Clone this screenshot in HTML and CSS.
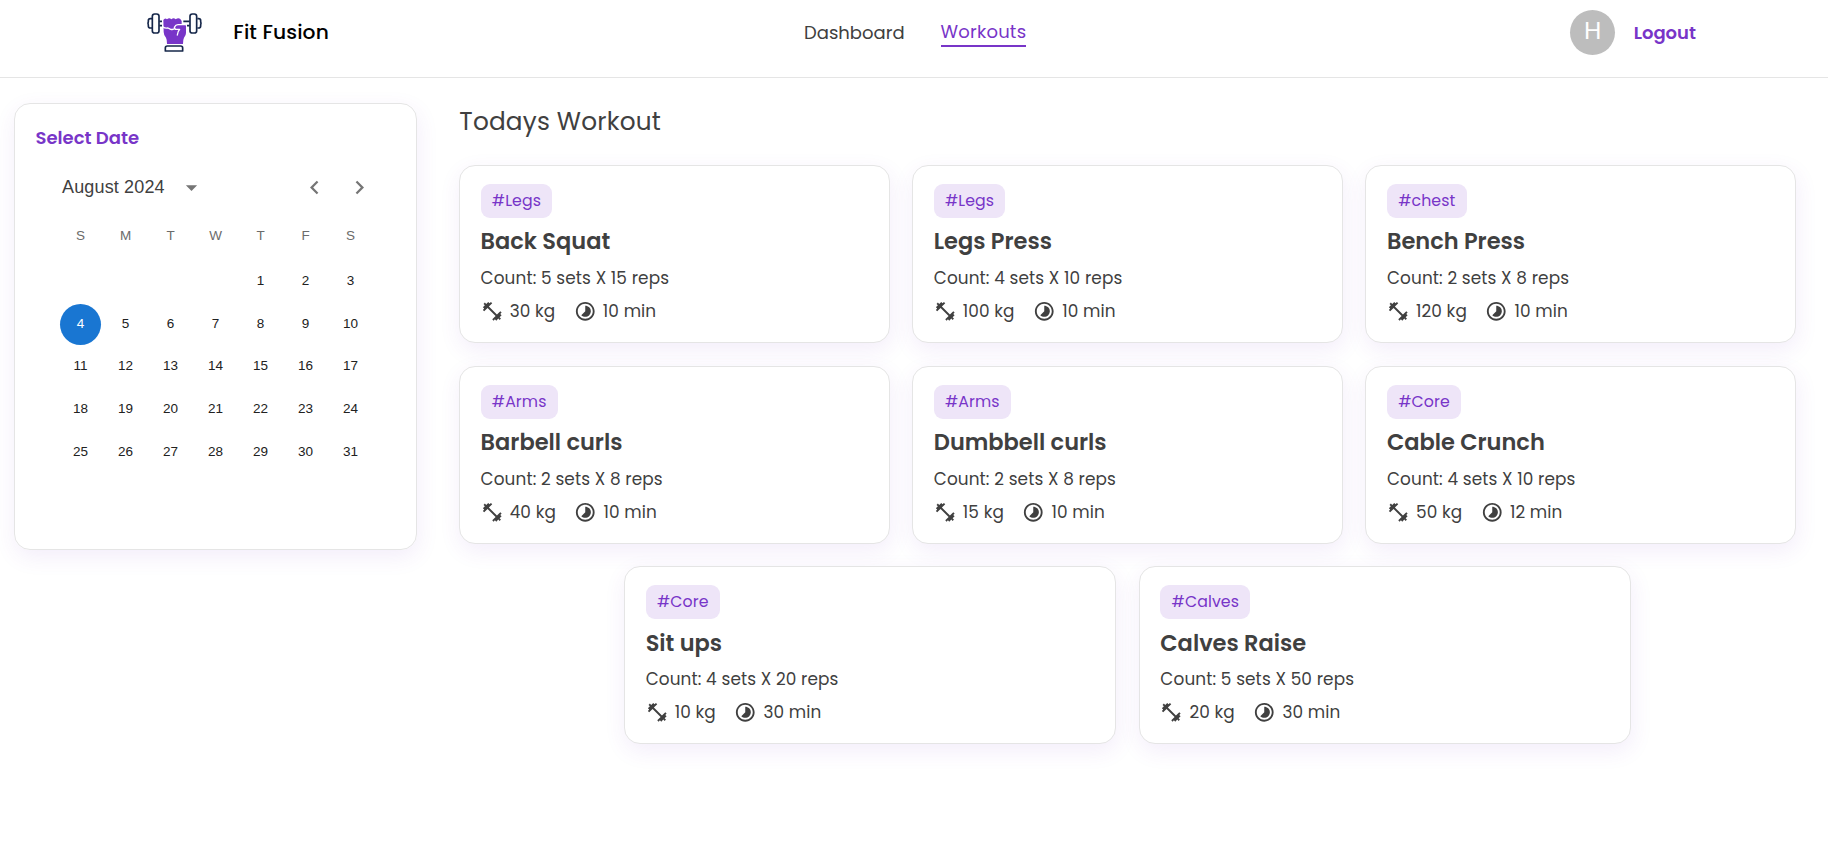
FILE: index.html
```
<!DOCTYPE html>
<html lang="en">
<head>
<meta charset="utf-8">
<title>Fit Fusion</title>
<link rel="stylesheet" href="styles.css">
</head>
<body>
<svg class="defs" width="0" height="0">
  <symbol id="dumbbell" viewBox="0 0 24 24"><path d="M20.57 14.86L22 13.43 20.57 12 17 15.57 8.43 7 12 3.43 10.57 2 9.14 3.43 7.71 2 5.57 4.14 4.14 2.71 2.71 4.14l1.43 1.43L2 7.71l1.43 1.43L2 10.57 3.43 12 7 8.43 15.57 17 12 20.57 13.43 22l1.43-1.43L16.29 22l2.14-2.14 1.43 1.43 1.43-1.43-1.43-1.43L22 16.29z"/></symbol>
  <symbol id="timelapse" viewBox="0 0 24 24"><path d="M16.24 7.76C15.07 6.59 13.54 6 12 6v6l-4.24 4.24c2.34 2.34 6.14 2.34 8.49 0 2.34-2.34 2.34-6.14-.01-8.48zM12 2C6.48 2 2 6.48 2 12s4.48 10 10 10 10-4.48 10-10S17.52 2 12 2zm0 18c-4.42 0-8-3.58-8-8s3.58-8 8-8 8 3.58 8 8-3.58 8-8 8z"/></symbol>
</svg>
<header class="navbar">
  <a class="brand">
    <svg class="logo" viewBox="48 36 172 124" fill="none">
      <g stroke="#16274a" stroke-width="5" stroke-linejoin="round">
        <path d="M66 56h-5q-6 0-6 6v3q-2 5 0 10v3q0 6 6 6h5M202 56h4q6 0 6 6v3q2 5 0 10v3q0 6-6 6h-4"/>
        <rect x="67" y="42" width="20" height="57" rx="7"/>
        <rect x="180" y="42" width="20" height="57" rx="7"/>
        <path d="M88 64h8M88 77h8M160 64h19M171 77h8"/>
        <path d="M106 153v-9q0-6 6-6h40q6 0 6 6v9z"/>
      </g>
      <path fill="#7835c8" d="M100 60q5-8 11-2 7-6 13 0 7-6 13 0 8-6 14-1l4 6v9h9l4 5v22q0 8-6 14-3 5-3 19h-48q0-14-3-19-7-8-7-17z"/>
      <path stroke="#fff" stroke-width="4" stroke-linecap="round" stroke-linejoin="round" d="M98 80q8 6 16 4l8 4q8 2 13-3M133 82q4-8 11-8h22M136 88h13q-5 5-7 17"/>
    </svg>
    <span class="brand-name">Fit Fusion</span>
  </a>
  <nav class="links"><a>Dashboard</a><a class="active">Workouts</a></nav>
  <div class="user"><span class="avatar">H</span><a class="logout">Logout</a></div>
</header>
<div class="page">
  <aside class="date-card">
    <h2 class="date-title">Select Date</h2>
    <div class="calendar">
      <div class="month-bar">
        <span class="month">August 2024</span>
        <svg class="arrow drop" viewBox="0 0 24 24"><path d="M7 10l5 5 5-5z"/></svg>
        <svg class="arrow prev" viewBox="0 0 24 24"><path d="M15.41 16.59L10.83 12l4.58-4.59L14 6l-6 6 6 6 1.41-1.41z"/></svg>
        <svg class="arrow next" viewBox="0 0 24 24"><path d="M8.59 16.59L13.17 12 8.59 7.41 10 6l6 6-6 6-1.41-1.41z"/></svg>
      </div>
      <div class="weekdays"><span>S</span><span>M</span><span>T</span><span>W</span><span>T</span><span>F</span><span>S</span></div>
      <div class="days">
        <span class="first">1</span><span>2</span><span>3</span>
        <span class="selected">4</span><span>5</span><span>6</span><span>7</span><span>8</span><span>9</span><span>10</span>
        <span>11</span><span>12</span><span>13</span><span>14</span><span>15</span><span>16</span><span>17</span>
        <span>18</span><span>19</span><span>20</span><span>21</span><span>22</span><span>23</span><span>24</span>
        <span>25</span><span>26</span><span>27</span><span>28</span><span>29</span><span>30</span><span>31</span>
      </div>
    </div>
  </aside>
  <main class="workouts">
    <h1 class="heading">Todays Workout</h1>
    <div class="cards">
      <article class="card"><span class="tag">#Legs</span><h3 class="name">Back Squat</h3><p class="count">Count: 5 sets X 15 reps</p><div class="meta"><span><svg><use href="#dumbbell"/></svg>30 kg</span><span><svg><use href="#timelapse"/></svg>10 min</span></div></article>
      <article class="card"><span class="tag">#Legs</span><h3 class="name">Legs Press</h3><p class="count">Count: 4 sets X 10 reps</p><div class="meta"><span><svg><use href="#dumbbell"/></svg>100 kg</span><span><svg><use href="#timelapse"/></svg>10 min</span></div></article>
      <article class="card"><span class="tag">#chest</span><h3 class="name">Bench Press</h3><p class="count">Count: 2 sets X 8 reps</p><div class="meta"><span><svg><use href="#dumbbell"/></svg>120 kg</span><span><svg><use href="#timelapse"/></svg>10 min</span></div></article>
      <article class="card"><span class="tag">#Arms</span><h3 class="name">Barbell curls</h3><p class="count">Count: 2 sets X 8 reps</p><div class="meta"><span><svg><use href="#dumbbell"/></svg>40 kg</span><span><svg><use href="#timelapse"/></svg>10 min</span></div></article>
      <article class="card"><span class="tag">#Arms</span><h3 class="name">Dumbbell curls</h3><p class="count">Count: 2 sets X 8 reps</p><div class="meta"><span><svg><use href="#dumbbell"/></svg>15 kg</span><span><svg><use href="#timelapse"/></svg>10 min</span></div></article>
      <article class="card"><span class="tag">#Core</span><h3 class="name">Cable Crunch</h3><p class="count">Count: 4 sets X 10 reps</p><div class="meta"><span><svg><use href="#dumbbell"/></svg>50 kg</span><span><svg><use href="#timelapse"/></svg>12 min</span></div></article>
      <article class="card wide"><span class="tag">#Core</span><h3 class="name">Sit ups</h3><p class="count">Count: 4 sets X 20 reps</p><div class="meta"><span><svg><use href="#dumbbell"/></svg>10 kg</span><span><svg><use href="#timelapse"/></svg>30 min</span></div></article>
      <article class="card wide"><span class="tag">#Calves</span><h3 class="name">Calves Raise</h3><p class="count">Count: 5 sets X 50 reps</p><div class="meta"><span><svg><use href="#dumbbell"/></svg>20 kg</span><span><svg><use href="#timelapse"/></svg>30 min</span></div></article>
    </div>
  </main>
</div>
</body>
</html>
```
FILE: styles.css
```
* { box-sizing: border-box; margin: 0; padding: 0; }
body { background: #fff; color: #404040; font-family: Poppins, Inter, sans-serif; height: 863px; overflow: hidden; }
.defs { display: block; }
.navbar { display: flex; align-items: flex-start; height: 78px; border-bottom: 1px solid #e5e5e5; padding: 0 132px 0 146px; }
.brand { display: flex; width: 658px; height: 65px; padding-top: 12px; color: #000; }
.logo { width: 57.33px; height: 41.33px; }
.brand-name { margin-left: 30px; font-size: 20.25px; line-height: 41px; font-weight: 500; letter-spacing: .12px; }
.links { display: flex; gap: 36px; font-size: 18px; line-height: 26px; padding-top: 20px; }
.links a { height: 27px; }
.links .active { color: #7835c8; margin-top: -1px; height: 28px; border-bottom: 2px solid #7835c8; letter-spacing: .2px; }
.user { display: flex; margin-left: auto; padding-top: 10px; align-items: center; gap: 18.5px; }
.avatar { width: 45px; height: 45px; border-radius: 50%; background: #bdbdbd; color: #fff; font: 400 24px/42px "Liberation Sans", Arial, sans-serif; text-align: center; }
.logout { font-size: 18px; font-weight: 600; color: #7835c8; }

.page { display: flex; align-items: flex-start; padding: 25px 32px 0 14px; }
.date-card { width: 403px; height: 447px; border: 1px solid #e5e5e5; border-radius: 16px; padding: 20px 20.5px; box-shadow: 1px 7px 22px 0 rgba(120, 53, 200, .09); }
.date-title { font-size: 18px; line-height: 27px; font-weight: 600; color: #7835c8; }
.calendar { width: 315px; margin: 21px 0 0 22.5px; font-family: "Liberation Sans", Arial, sans-serif; }
.month-bar { display: flex; align-items: center; height: 30px; padding-left: 4px; }
.month { font-size: 18px; letter-spacing: .15px; color: #404040; line-height: 30px; width: 116px; }
.arrow { width: 27px; height: 27px; fill: #757575; }
.prev { margin-left: 96px; }
.next { margin-left: 18px; }
.weekdays, .days { display: grid; grid-template-columns: repeat(7, 45px); justify-items: center; text-align: center; font-size: 13.5px; }
.weekdays { margin-top: 11px; color: #6b6b6b; line-height: 45px; }
.days { grid-auto-rows: 42.8px; align-items: center; margin-top: 2px; color: #212121; }
.days span { width: 41px; height: 41px; line-height: 39px; border-radius: 50%; }
.days .first { grid-column: 5; }
.days .selected { background: #1976d2; color: #fff; }

.workouts { width: 1337.2px; margin-left: auto; }
.heading { font-size: 24.75px; line-height: 38px; font-weight: 400; letter-spacing: .2px; padding-left: .5px; margin-bottom: 24px; }
.cards { display: flex; flex-wrap: wrap; justify-content: center; gap: 22.4px 22.5px; }
.card { width: 430.7px; height: 178.2px; border: 1px solid #e5e5e5; border-radius: 16px; padding: 18px 20.7px; background: #fff; box-shadow: 1px 7px 22px 0 rgba(120, 53, 200, .09); display: flex; flex-direction: column; align-items: flex-start; gap: 6px; }
.card.wide { width: 492.2px; }
.tag { height: 34px; padding: 0 11.25px; border-radius: 9px; background: #eee5f8; color: #7835c8; font-size: 15.75px; line-height: 34px; letter-spacing: .1px; }
.name { font-size: 22.5px; line-height: 35px; font-weight: 600; }
.wide .name { position: relative; top: .4px; }
.count { font-size: 16.875px; line-height: 27px; letter-spacing: .12px; }
.meta { display: flex; gap: 18.5px; font-size: 16.875px; letter-spacing: .1px; line-height: 27px; }
.meta span { display: flex; align-items: center; gap: 6.6px; }
.meta svg { width: 22.5px; height: 22.5px; fill: #404040; }
```
